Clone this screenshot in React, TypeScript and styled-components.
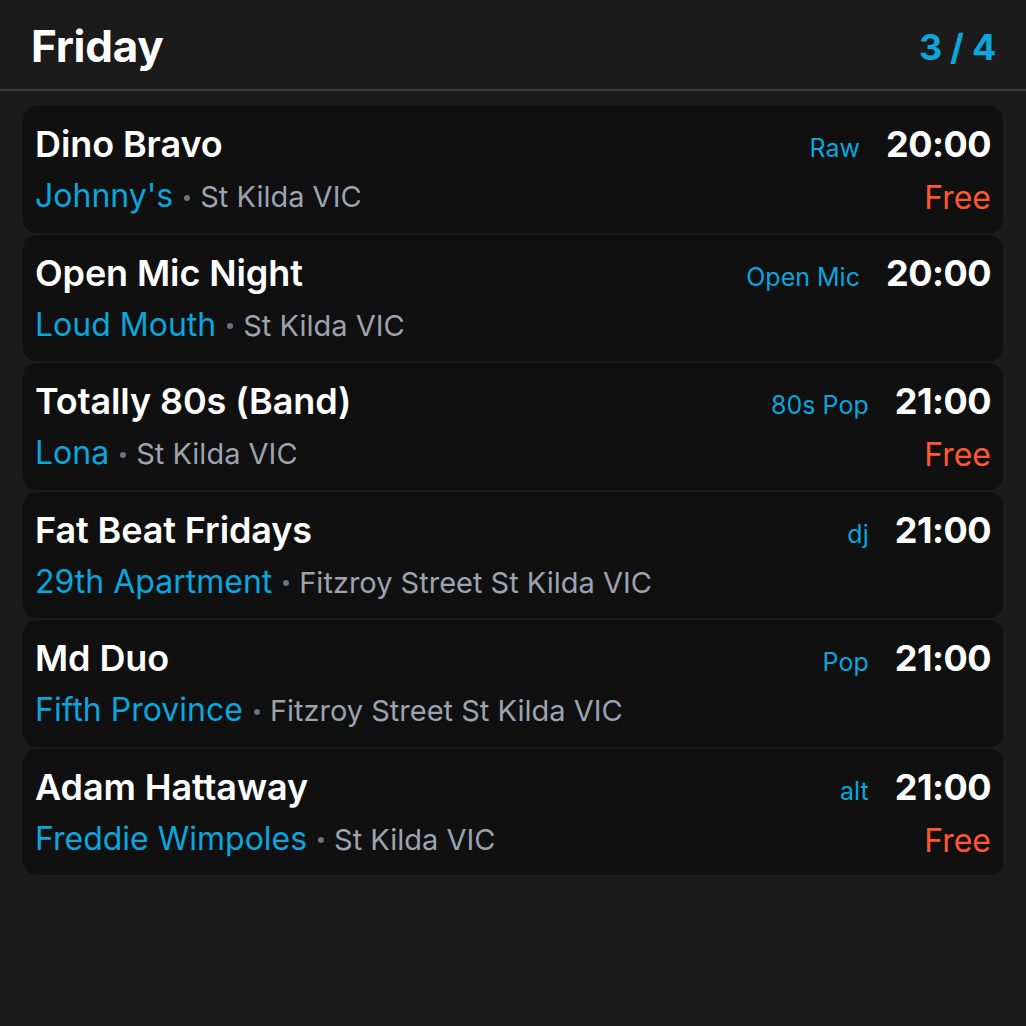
import React from "react";
import styled, { createGlobalStyle } from "styled-components";

interface Gig {
  title: string;
  venue: string;
  location: string;
  tag: string;
  time: string;
  free?: boolean;
}

const gigs: Gig[] = [
  { title: "Dino Bravo", venue: "Johnny's", location: "St Kilda VIC", tag: "Raw", time: "20:00", free: true },
  { title: "Open Mic Night", venue: "Loud Mouth", location: "St Kilda VIC", tag: "Open Mic", time: "20:00" },
  { title: "Totally 80s (Band)", venue: "Lona", location: "St Kilda VIC", tag: "80s Pop", time: "21:00", free: true },
  { title: "Fat Beat Fridays", venue: "29th Apartment", location: "Fitzroy Street St Kilda VIC", tag: "dj", time: "21:00" },
  { title: "Md Duo", venue: "Fifth Province", location: "Fitzroy Street St Kilda VIC", tag: "Pop", time: "21:00" },
  { title: "Adam Hattaway", venue: "Freddie Wimpoles", location: "St Kilda VIC", tag: "alt", time: "21:00", free: true },
];

const App: React.FC = () => {
  return (
    <>
      <GlobalStyle />
      <Page>
        <Header>
          <DayTitle>Friday</DayTitle>
          <PageCount>3 / 4</PageCount>
        </Header>
        <GigList>
          {gigs.map((gig) => (
            <GigCard key={gig.title}>
              <TopRow>
                <GigTitle>{gig.title}</GigTitle>
                <TimeGroup>
                  <Tag>{gig.tag}</Tag>
                  <Time>{gig.time}</Time>
                </TimeGroup>
              </TopRow>
              <BottomRow>
                <Where>
                  <Venue>{gig.venue}</Venue>
                  <Dot />
                  <Location>{gig.location}</Location>
                </Where>
                {gig.free && <Price>Free</Price>}
              </BottomRow>
            </GigCard>
          ))}
        </GigList>
      </Page>
    </>
  );
};

export default App;

const GlobalStyle = createGlobalStyle`
  html, body {
    margin: 0;
    padding: 0;
    background: #1b1b1b;
  }
  body {
    font-family: Inter, "Noto Sans", "Liberation Sans", sans-serif;
    -webkit-font-smoothing: antialiased;
  }
  * {
    box-sizing: border-box;
  }
`;

const Page = styled.div`
  min-height: 100vh;
  background: #1b1b1b;
`;

const Header = styled.header`
  display: flex;
  justify-content: space-between;
  align-items: center;
  height: 91px;
  padding: 20px 30px 16px 31px;
  border-bottom: 2px solid #373e4b;
`;

const DayTitle = styled.h1`
  margin: 0;
  font-size: 44px;
  line-height: 53px;
  font-weight: 700;
  color: #ffffff;
  letter-spacing: -0.3px;
`;

const PageCount = styled.span`
  font-size: 36px;
  line-height: 44px;
  font-weight: 700;
  color: #0aa6dd;
  letter-spacing: -0.3px;
`;

const GigList = styled.div`
  display: flex;
  flex-direction: column;
  gap: 2px;
  padding: 15px 23px;
`;

const GigCard = styled.div`
  display: flex;
  flex-direction: column;
  gap: 11px;
  padding: 16px 12px 17.5px 12px;
  background: #101010;
  border-radius: 14px;
`;

const TopRow = styled.div`
  display: flex;
  justify-content: space-between;
  align-items: baseline;
  height: 44px;
`;

const BottomRow = styled.div`
  display: flex;
  justify-content: space-between;
  align-items: baseline;
  height: 38px;
`;

const GigTitle = styled.div`
  font-size: 36px;
  line-height: 44px;
  font-weight: 600;
  color: #ffffff;
  white-space: nowrap;
  letter-spacing: -0.1px;
`;

const TimeGroup = styled.div`
  display: flex;
  align-items: baseline;
  gap: 26px;
`;

const Tag = styled.span`
  font-size: 25px;
  color: #0aa6dd;
`;

const Time = styled.span`
  font-size: 36px;
  line-height: 44px;
  font-weight: 700;
  color: #ffffff;
  letter-spacing: -0.5px;
`;

const Where = styled.div`
  display: flex;
  align-items: baseline;
  white-space: nowrap;
`;

const Venue = styled.span`
  font-size: 32px;
  line-height: 38px;
  color: #0aa6dd;
`;

const Dot = styled.span`
  width: 6px;
  height: 6px;
  margin: 0 10px 0 11px;
  border-radius: 50%;
  background: #6b7280;
  align-self: center;
  position: relative;
  top: 1px;
`;

const Location = styled.span`
  font-size: 29px;
  line-height: 38px;
  color: #9ca3af;
`;

const Price = styled.span`
  font-size: 32px;
  line-height: 38px;
  color: #ff5733;
  position: relative;
  top: 2px;
`;
